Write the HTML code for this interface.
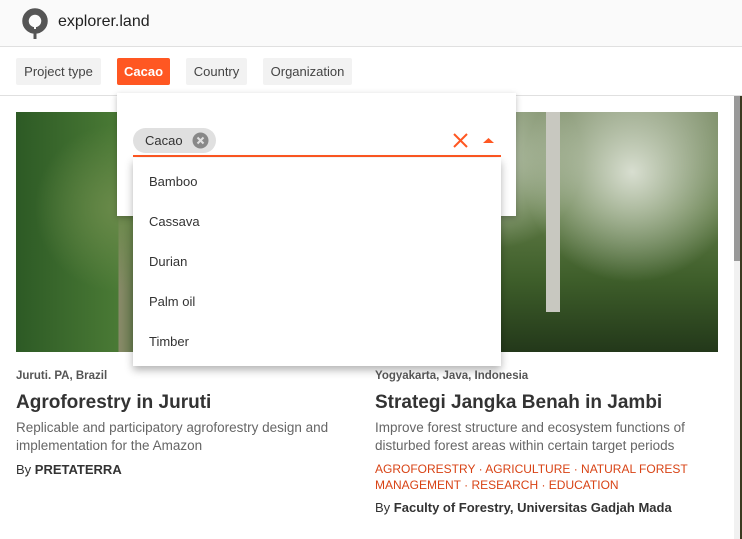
<!DOCTYPE html>
<html><head><meta charset="utf-8"><style>
*{margin:0;padding:0;box-sizing:border-box}
body{width:742px;height:539px;overflow:hidden;background:#fff;font-family:"Liberation Sans",sans-serif;position:relative;color:#333}
.hdr{position:absolute;left:0;top:0;width:742px;height:47px;background:#fafafa;border-bottom:1px solid #e0e0e0}
.logo{position:absolute;left:22px;top:8px}
.brand{position:absolute;left:58px;top:13px;font-size:16px;color:#222}
.bar{position:absolute;top:47px;left:0;width:742px;height:49px;border-bottom:1px solid #e0e0e0;background:#fff}
.chip{position:absolute;top:58px;height:27px;background:#f2f2f2;font-size:13px;color:#444;line-height:27px;text-align:center;border-radius:2px}
.img{position:absolute;top:112px;height:240px}
.sb{position:absolute;left:734px;top:96px;width:6px;height:443px;background:#f1f1f1}
.sbt{position:absolute;left:734px;top:96px;width:6px;height:165px;background:#999}
.edge{position:absolute;left:740px;top:96px;width:2px;height:443px;background:#3b3a20}
.panel{position:absolute;left:117px;top:93px;width:399px;height:123px;background:#fff;box-shadow:0 2px 6px rgba(0,0,0,.25)}
.menu{position:absolute;left:133px;top:158px;width:368px;height:208px;background:#fff;box-shadow:0 4px 8px rgba(0,0,0,.3)}
.menu div{height:40px;line-height:47px;padding-left:16px;font-size:13px;color:#333}
.loc{position:absolute;font-size:11.5px;font-weight:bold;color:#555;top:370px}
.tt{position:absolute;font-size:19px;font-weight:bold;color:#333;top:392px}
.ds{position:absolute;font-size:13.5px;color:#666;line-height:18px;top:419px;width:345px}
.by{position:absolute;font-size:13px;color:#333}
.tags{position:absolute;left:375px;top:461px;font-size:12px;color:#d84315;line-height:16px;width:320px}
</style></head><body>
<div class="hdr">
<svg class="logo" width="26" height="31" viewBox="0 0 26 31"><circle cx="13" cy="13" r="9.5" fill="none" stroke="#555" stroke-width="6.5"/><rect x="11.5" y="19" width="3" height="12" fill="#555"/><rect x="12" y="18" width="2" height="3" fill="#fafafa"/></svg>
<div class="brand">explorer.land</div>
</div>
<div class="bar"></div>
<div class="chip" style="left:16px;width:85px">Project type</div>
<div class="chip" style="left:117px;width:53px;background:#ff5722;color:#fff;font-weight:bold">Cacao</div>
<div class="chip" style="left:186px;width:61px">Country</div>
<div class="chip" style="left:263px;width:89px">Organization</div>

<div class="img" style="left:16px;width:342px;background:radial-gradient(circle at 30% 40%,#6a8a4a 0,transparent 30%),radial-gradient(circle at 80% 70%,#2f5a22 0,transparent 40%),linear-gradient(90deg,#2d5a25,#4a7a35 30%,#8a8a6a 28%,#3e6e2c 40%,#2a5520 70%,#3a6a28)"></div>
<div class="img" style="left:375px;width:343px;background:radial-gradient(circle at 75% 25%,#d8ded0 0,transparent 35%),radial-gradient(circle at 35% 20%,#b9c4ad 0,transparent 30%),linear-gradient(180deg,#7e8f6a 0,#5f7a45 40%,#3e5e2a 70%,#23381a)"></div>
<div style="position:absolute;left:546px;top:112px;width:14px;height:200px;background:#c8c8c0"></div>

<div class="panel"></div>
<div style="position:absolute;left:133px;top:128px;width:83px;height:25px;border-radius:13px;background:#e0e0e0;font-size:13px;line-height:25px;padding-left:12px;color:#333">Cacao</div>
<svg style="position:absolute;left:192px;top:132px" width="17" height="17" viewBox="0 0 17 17"><circle cx="8.5" cy="8.5" r="8" fill="#888"/><path d="M5.5 5.5l6 6M11.5 5.5l-6 6" stroke="#e0e0e0" stroke-width="2"/></svg>
<svg style="position:absolute;left:453px;top:133px" width="15" height="15"><path d="M1 1l13 13M14 1L1 14" stroke="#ff5722" stroke-width="2"/></svg>
<svg style="position:absolute;left:483px;top:137px" width="11" height="7"><path d="M0 6l5.5-5 5.5 5z" fill="#ff5722"/></svg>
<div style="position:absolute;left:133px;top:155px;width:368px;height:2px;background:#ff5722"></div>
<div class="menu"><div>Bamboo</div><div>Cassava</div><div>Durian</div><div>Palm oil</div><div>Timber</div></div>

<div class="loc" style="left:16px">Juruti. PA, Brazil</div>
<div class="tt" style="left:16px">Agroforestry in Juruti</div>
<div class="ds" style="left:16px">Replicable and participatory agroforestry design and implementation for the Amazon</div>
<div class="by" style="left:16px;top:462px">By <b>PRETATERRA</b></div>

<div class="loc" style="left:375px">Yogyakarta, Java, Indonesia</div>
<div class="tt" style="left:375px">Strategi Jangka Benah in Jambi</div>
<div class="ds" style="left:375px">Improve forest structure and ecosystem functions of disturbed forest areas within certain target periods</div>
<div class="tags">AGROFORESTRY · AGRICULTURE · NATURAL FOREST MANAGEMENT · RESEARCH · EDUCATION</div>
<div class="by" style="left:375px;top:500px">By <b>Faculty of Forestry, Universitas Gadjah Mada</b></div>

<div class="sb"></div><div class="sbt"></div><div class="edge"></div>
</body></html>
